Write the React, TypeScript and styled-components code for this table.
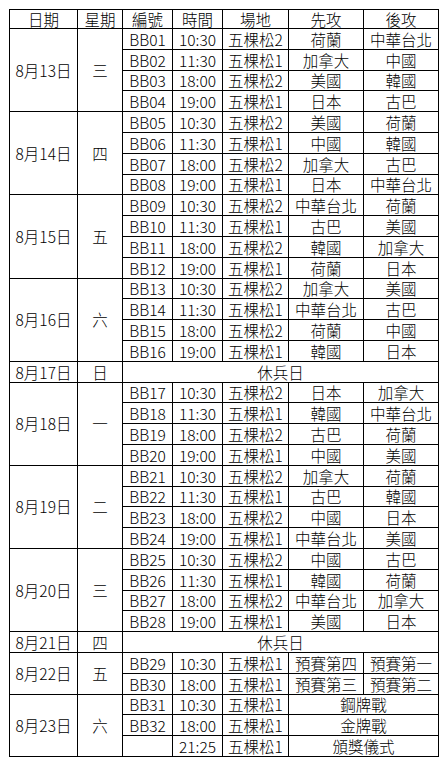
import React from "react";
import styled, { createGlobalStyle } from "styled-components";

const Global = createGlobalStyle`
  html, body { margin: 0; padding: 0; background: #fff; }
  body { padding: 9px 0 0 9px; }
`;

const Table = styled.table`
  border-collapse: collapse;
  table-layout: fixed;
  width: 430px;
  font-family: "Noto Sans CJK TC", "Liberation Sans", sans-serif;
  font-size: 15.5px;
  font-weight: 300;
  color: #000;
  border: 1px solid #000;
`;

const Col = styled.col<{ $w: number }>`
  width: ${(p) => p.$w}px;
`;

const HeadRow = styled.tr`
  height: 19px;
`;

const Row = styled.tr`
  height: 20.8px;
`;

const Th = styled.th`
  border: 1px solid #000;
  padding: 0;
  font-weight: 300;
  text-align: center;
  vertical-align: bottom;
  line-height: 18px;
  white-space: nowrap;
`;

const Td = styled.td<{ $mid?: boolean }>`
  border: 1px solid #000;
  padding: 0;
  text-align: center;
  vertical-align: ${(p) => (p.$mid ? "middle" : "bottom")};
  line-height: 19px;
  white-space: nowrap;
  overflow: hidden;
`;

type Game = [string, string, string, string, string?];
type Day = { date: string; wd: string; rest?: boolean; games?: Game[] };

const days: Day[] = [
  {
    date: "8月13日",
    wd: "三",
    games: [
      ["BB01", "10:30", "五棵松2", "荷蘭", "中華台北"],
      ["BB02", "11:30", "五棵松1", "加拿大", "中國"],
      ["BB03", "18:00", "五棵松2", "美國", "韓國"],
      ["BB04", "19:00", "五棵松1", "日本", "古巴"],
    ],
  },
  {
    date: "8月14日",
    wd: "四",
    games: [
      ["BB05", "10:30", "五棵松2", "美國", "荷蘭"],
      ["BB06", "11:30", "五棵松1", "中國", "韓國"],
      ["BB07", "18:00", "五棵松2", "加拿大", "古巴"],
      ["BB08", "19:00", "五棵松1", "日本", "中華台北"],
    ],
  },
  {
    date: "8月15日",
    wd: "五",
    games: [
      ["BB09", "10:30", "五棵松2", "中華台北", "荷蘭"],
      ["BB10", "11:30", "五棵松1", "古巴", "美國"],
      ["BB11", "18:00", "五棵松2", "韓國", "加拿大"],
      ["BB12", "19:00", "五棵松1", "荷蘭", "日本"],
    ],
  },
  {
    date: "8月16日",
    wd: "六",
    games: [
      ["BB13", "10:30", "五棵松2", "加拿大", "美國"],
      ["BB14", "11:30", "五棵松1", "中華台北", "古巴"],
      ["BB15", "18:00", "五棵松2", "荷蘭", "中國"],
      ["BB16", "19:00", "五棵松1", "韓國", "日本"],
    ],
  },
  { date: "8月17日", wd: "日", rest: true },
  {
    date: "8月18日",
    wd: "一",
    games: [
      ["BB17", "10:30", "五棵松2", "日本", "加拿大"],
      ["BB18", "11:30", "五棵松1", "韓國", "中華台北"],
      ["BB19", "18:00", "五棵松2", "古巴", "荷蘭"],
      ["BB20", "19:00", "五棵松1", "中國", "美國"],
    ],
  },
  {
    date: "8月19日",
    wd: "二",
    games: [
      ["BB21", "10:30", "五棵松2", "加拿大", "荷蘭"],
      ["BB22", "11:30", "五棵松1", "古巴", "韓國"],
      ["BB23", "18:00", "五棵松2", "中國", "日本"],
      ["BB24", "19:00", "五棵松1", "中華台北", "美國"],
    ],
  },
  {
    date: "8月20日",
    wd: "三",
    games: [
      ["BB25", "10:30", "五棵松2", "中國", "古巴"],
      ["BB26", "11:30", "五棵松1", "韓國", "荷蘭"],
      ["BB27", "18:00", "五棵松2", "中華台北", "加拿大"],
      ["BB28", "19:00", "五棵松1", "美國", "日本"],
    ],
  },
  { date: "8月21日", wd: "四", rest: true },
  {
    date: "8月22日",
    wd: "五",
    games: [
      ["BB29", "10:30", "五棵松1", "預賽第四", "預賽第一"],
      ["BB30", "18:00", "五棵松1", "預賽第三", "預賽第二"],
    ],
  },
  {
    date: "8月23日",
    wd: "六",
    games: [
      ["BB31", "10:30", "五棵松1", "鋼牌戰"],
      ["BB32", "18:00", "五棵松1", "金牌戰"],
      ["", "21:25", "五棵松1", "頒獎儀式"],
    ],
  },
];

const widths = [68, 45, 50, 50, 66, 75, 75];
const heads = ["日期", "星期", "編號", "時間", "場地", "先攻", "後攻"];

export default function App() {
  const rows: React.ReactNode[] = [];
  days.forEach((d) => {
    if (d.rest) {
      rows.push(
        <Row key={d.date}>
          <Td>{d.date}</Td>
          <Td>{d.wd}</Td>
          <Td colSpan={5}>休兵日</Td>
        </Row>
      );
      return;
    }
    const games = d.games || [];
    games.forEach((g, i) => {
      rows.push(
        <Row key={d.date + i}>
          {i === 0 && (
            <>
              <Td $mid rowSpan={games.length}>
                {d.date}
              </Td>
              <Td $mid rowSpan={games.length}>
                {d.wd}
              </Td>
            </>
          )}
          <Td>{g[0]}</Td>
          <Td>{g[1]}</Td>
          <Td>{g[2]}</Td>
          {g[4] === undefined ? (
            <Td colSpan={2}>{g[3]}</Td>
          ) : (
            <>
              <Td>{g[3]}</Td>
              <Td>{g[4]}</Td>
            </>
          )}
        </Row>
      );
    });
  });

  return (
    <>
      <Global />
      <Table>
        <colgroup>
          {widths.map((w, i) => (
            <Col key={i} $w={w} />
          ))}
        </colgroup>
        <thead>
          <HeadRow>
            {heads.map((h) => (
              <Th key={h}>{h}</Th>
            ))}
          </HeadRow>
        </thead>
        <tbody>{rows}</tbody>
      </Table>
    </>
  );
}
